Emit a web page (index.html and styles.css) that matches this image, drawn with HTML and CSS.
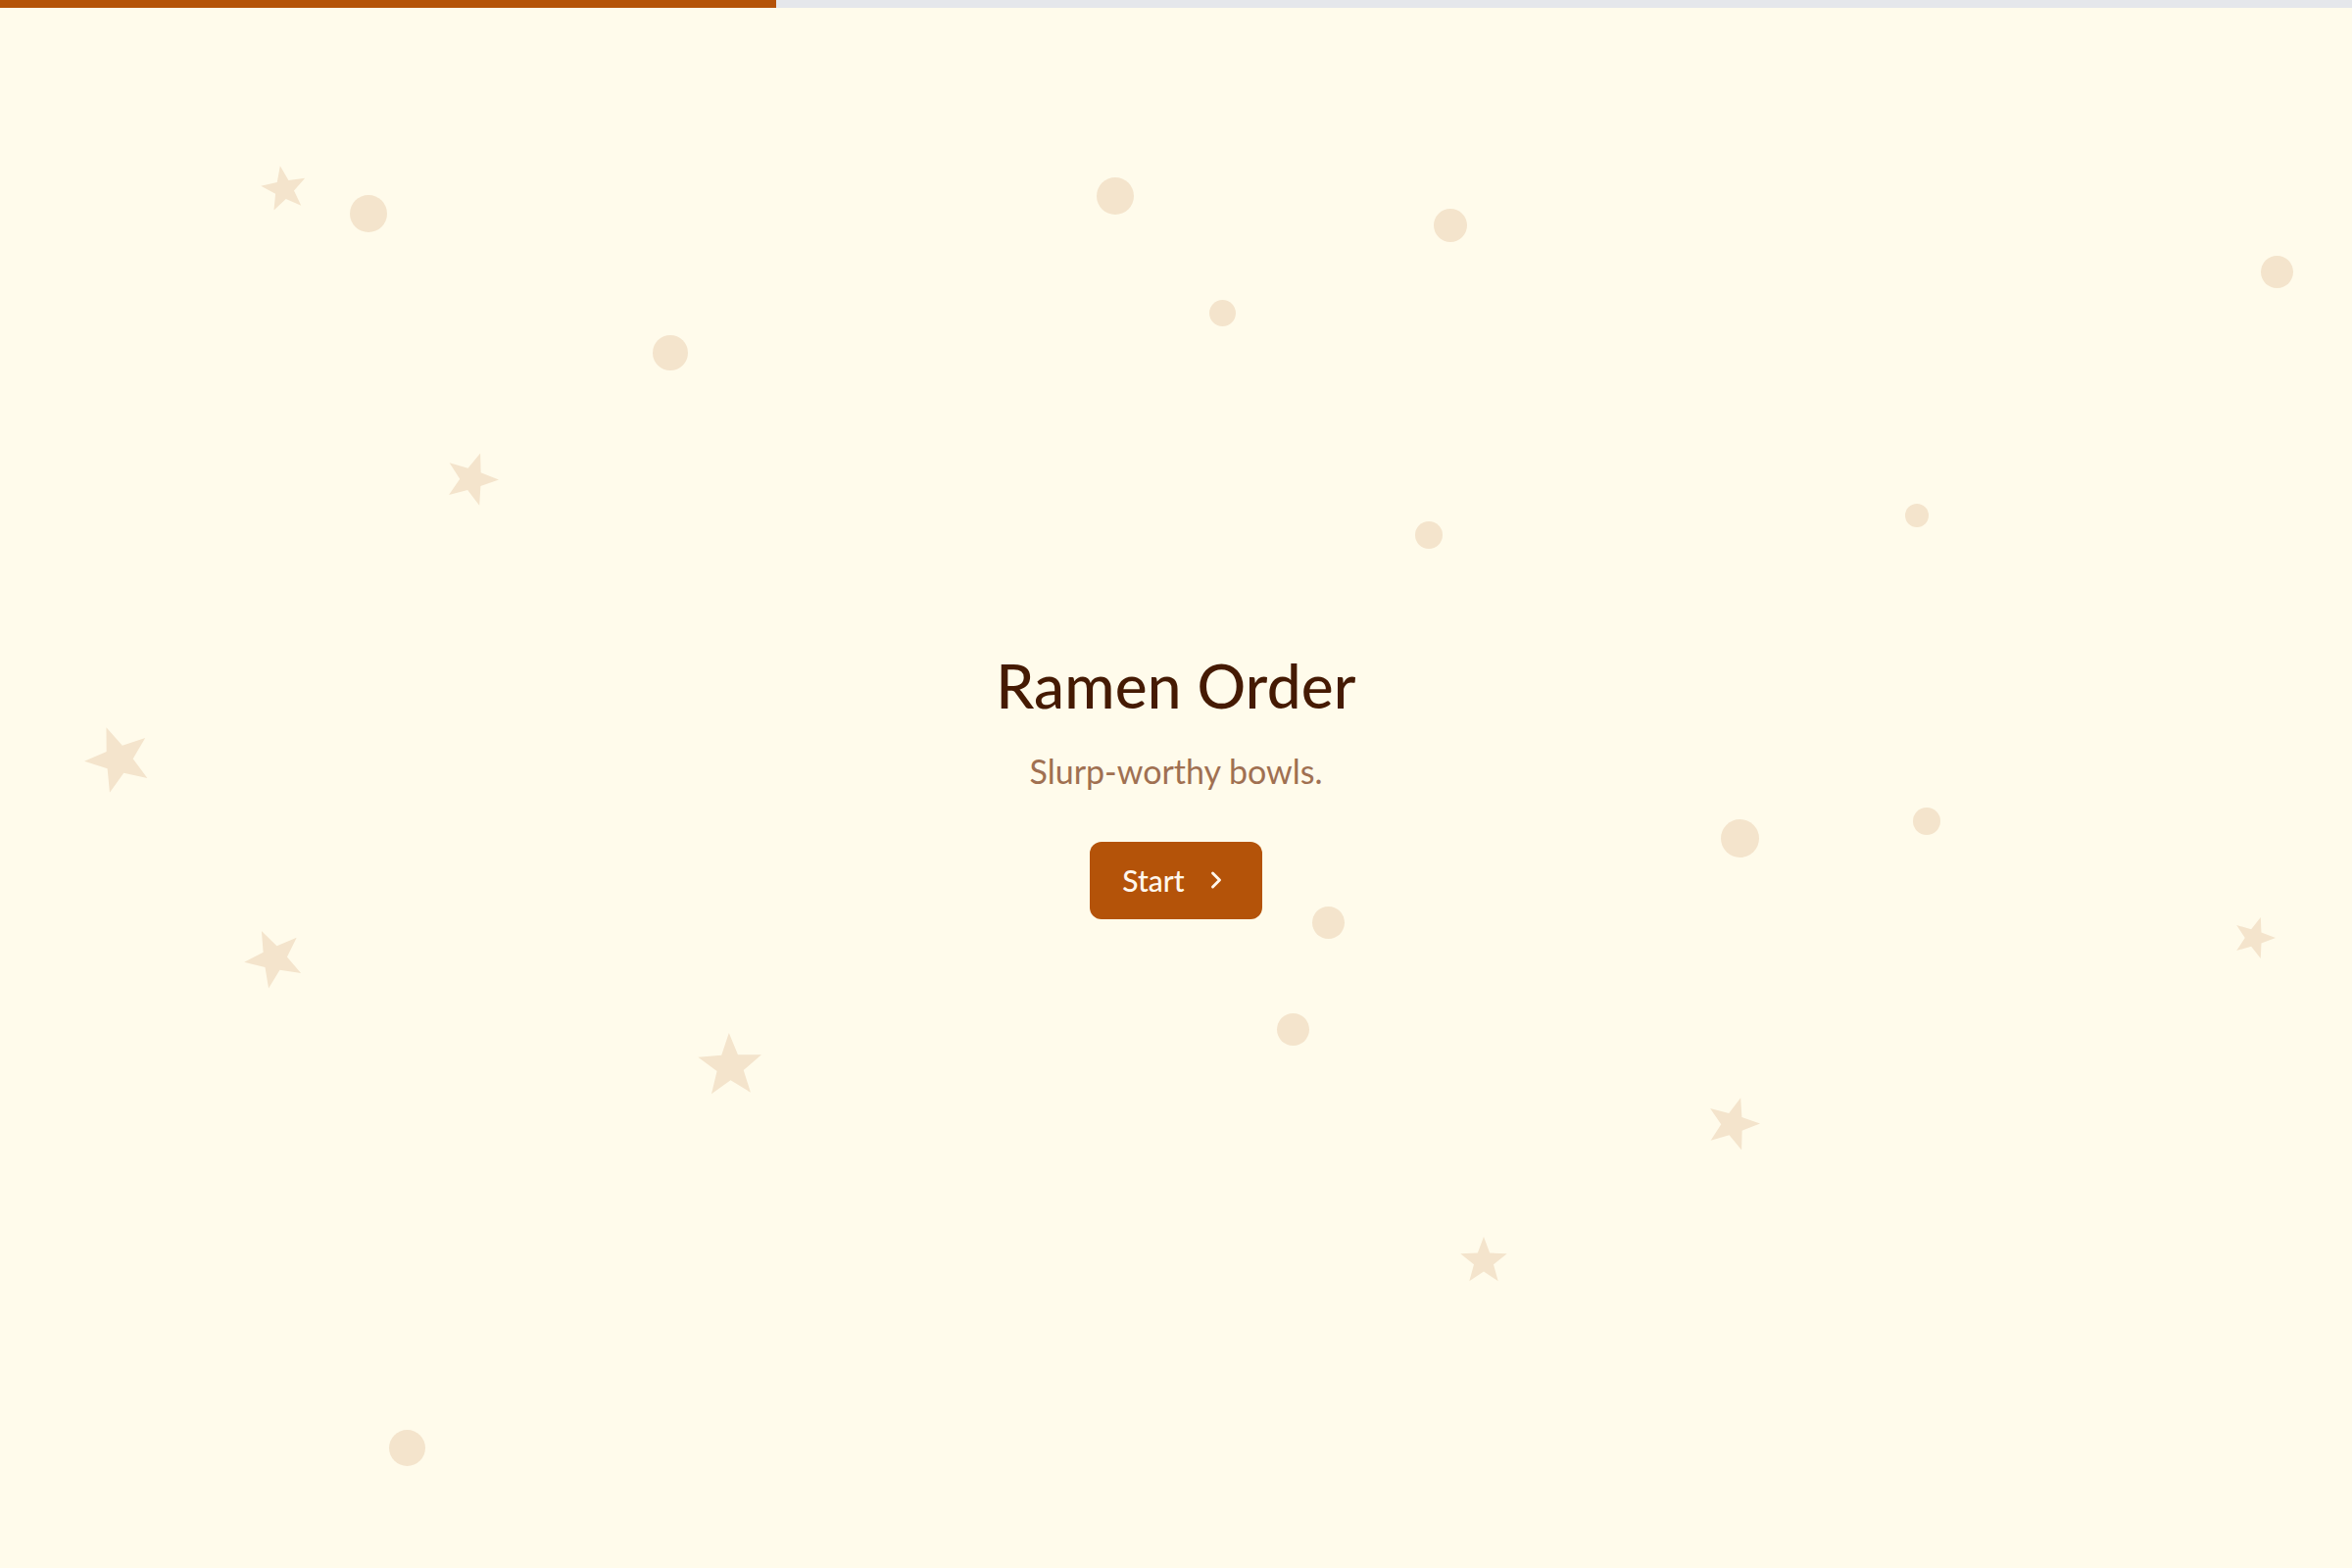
FILE: index.html
```html
<!DOCTYPE html>
<html lang="en">
<head>
<meta charset="utf-8">
<title>Ramen Order</title>
<link rel="stylesheet" href="styles.css">
</head>
<body>
<div class="page">
  <div class="progress"><div class="progress-fill"></div></div>

  <div class="decor" aria-hidden="true">
    <span class="dot c1"></span>
    <span class="dot c2"></span>
    <span class="dot c3"></span>
    <span class="dot c4"></span>
    <span class="dot c5"></span>
    <span class="dot c6"></span>
    <span class="dot c7"></span>
    <span class="dot c8"></span>
    <span class="dot c9"></span>
    <span class="dot c10"></span>
    <span class="dot c11"></span>
    <span class="dot c12"></span>
    <span class="dot c13"></span>

    <svg class="star st1" viewBox="-1 -1 2 2"><polygon points="0,-1 0.2469,-0.3398 0.9511,-0.309 0.3995,0.1298 0.5878,0.809 0,0.42 -0.5878,0.809 -0.3995,0.1298 -0.9511,-0.309 -0.2469,-0.3398"/></svg>
    <svg class="star st2" viewBox="-1 -1 2 2"><polygon points="0,-1 0.2469,-0.3398 0.9511,-0.309 0.3995,0.1298 0.5878,0.809 0,0.42 -0.5878,0.809 -0.3995,0.1298 -0.9511,-0.309 -0.2469,-0.3398"/></svg>
    <svg class="star st3" viewBox="-1 -1 2 2"><polygon points="0,-1 0.2469,-0.3398 0.9511,-0.309 0.3995,0.1298 0.5878,0.809 0,0.42 -0.5878,0.809 -0.3995,0.1298 -0.9511,-0.309 -0.2469,-0.3398"/></svg>
    <svg class="star st4" viewBox="-1 -1 2 2"><polygon points="0,-1 0.2469,-0.3398 0.9511,-0.309 0.3995,0.1298 0.5878,0.809 0,0.42 -0.5878,0.809 -0.3995,0.1298 -0.9511,-0.309 -0.2469,-0.3398"/></svg>
    <svg class="star st5" viewBox="-1 -1 2 2"><polygon points="0,-1 0.2469,-0.3398 0.9511,-0.309 0.3995,0.1298 0.5878,0.809 0,0.42 -0.5878,0.809 -0.3995,0.1298 -0.9511,-0.309 -0.2469,-0.3398"/></svg>
    <svg class="star st6" viewBox="-1 -1 2 2"><polygon points="0,-1 0.2469,-0.3398 0.9511,-0.309 0.3995,0.1298 0.5878,0.809 0,0.42 -0.5878,0.809 -0.3995,0.1298 -0.9511,-0.309 -0.2469,-0.3398"/></svg>
    <svg class="star st7" viewBox="-1 -1 2 2"><polygon points="0,-1 0.2469,-0.3398 0.9511,-0.309 0.3995,0.1298 0.5878,0.809 0,0.42 -0.5878,0.809 -0.3995,0.1298 -0.9511,-0.309 -0.2469,-0.3398"/></svg>
    <svg class="star st8" viewBox="-1 -1 2 2"><polygon points="0,-1 0.2469,-0.3398 0.9511,-0.309 0.3995,0.1298 0.5878,0.809 0,0.42 -0.5878,0.809 -0.3995,0.1298 -0.9511,-0.309 -0.2469,-0.3398"/></svg>
  </div>

  <main class="hero">
    <h1 class="title">Ramen Order</h1>
    <p class="subtitle">Slurp-worthy bowls.</p>
    <button class="start-btn" type="button">
      <span>Start</span>
      <svg class="chev" viewBox="0 0 24 24" fill="none" stroke="currentColor" stroke-width="2.5" stroke-linecap="round" stroke-linejoin="round"><path d="m9 18 6-6-6-6"/></svg>
    </button>
  </main>
</div>
</body>
</html>
```

FILE: styles.css
```css
* { box-sizing: border-box; }

html, body {
  margin: 0;
  padding: 0;
  height: 100%;
}

body {
  background: #fffbeb;
  font-family: Lato, "Open Sans", "Noto Sans", sans-serif;
  overflow: hidden;
}

.page {
  position: relative;
  display: flex;
  flex-direction: column;
  min-height: 100vh;
}

/* progress bar overlays the top edge of the page */
.progress {
  position: absolute;
  top: 0;
  left: 0;
  right: 0;
  z-index: 2;
  height: 8px;
  background: #e5e7eb;
}

.progress-fill {
  width: 33%;
  height: 100%;
  background: #b45309;
}

.decor {
  position: absolute;
  inset: 0;
  pointer-events: none;
  z-index: 0;
}

.dot {
  position: absolute;
  border-radius: 50%;
  background: #f4e4cc;
}

.star {
  position: absolute;
  fill: #f4e4cc;
  overflow: visible;
}

/* circles: left = cx - d/2, top = cy - d/2 */
.c1  { left: 357px;  top: 199px;  width: 38px; height: 38px; }
.c2  { left: 1119px; top: 181px;  width: 38px; height: 38px; }
.c3  { left: 1463px; top: 213px;  width: 34px; height: 34px; }
.c4  { left: 1234px; top: 306px;  width: 27px; height: 27px; }
.c5  { left: 666px;  top: 342px;  width: 36px; height: 36px; }
.c6  { left: 2307px; top: 261px;  width: 33px; height: 33px; }
.c7  { left: 1444px; top: 532px;  width: 28px; height: 28px; }
.c8  { left: 1944px; top: 514px;  width: 24px; height: 24px; }
.c9  { left: 1756px; top: 836px;  width: 39px; height: 39px; }
.c10 { left: 1952px; top: 824px;  width: 28px; height: 28px; }
.c11 { left: 1339px; top: 925px;  width: 33px; height: 33px; }
.c12 { left: 1303px; top: 1034px; width: 33px; height: 33px; }
.c13 { left: 397px;  top: 1459px; width: 37px; height: 37px; }

/* stars: left = cx - R, top = cy - R, size = 2R */
.st1 { left: 266px;  top: 169px;  width: 48px; height: 48px; transform: rotate(-10deg); }
.st2 { left: 453px;  top: 461px;  width: 56px; height: 56px; transform: rotate(19deg); }
.st3 { left: 86px;   top: 740px;  width: 70px; height: 70px; transform: rotate(-21deg); }
.st4 { left: 249px;  top: 947px;  width: 62px; height: 62px; transform: rotate(-25deg); }
.st5 { left: 711px;  top: 1054px; width: 68px; height: 68px; transform: rotate(-2deg); }
.st6 { left: 2278px; top: 935px;  width: 44px; height: 44px; transform: rotate(18deg); }
.st7 { left: 1740px; top: 1119px; width: 56px; height: 56px; transform: rotate(17deg); }
.st8 { left: 1489px; top: 1262px; width: 50px; height: 50px; transform: rotate(0deg); }

.hero {
  position: relative;
  z-index: 1;
  flex: 1 1 auto;
  display: flex;
  flex-direction: column;
  align-items: center;
  justify-content: center;
  text-align: center;
}

.title {
  margin: 0;
  font-size: 62px;
  line-height: 1.2;
  font-weight: 500;
  color: #451a03;
  letter-spacing: 0.2px;
}

.subtitle {
  margin: 24px 0 0;
  font-size: 34px;
  line-height: 1.5;
  font-weight: 400;
  color: #a07051;
}

.start-btn {
  margin-top: 47px;
  display: inline-flex;
  align-items: center;
  gap: 18px;
  height: 79px;
  padding: 0 33px;
  border: none;
  border-radius: 12px;
  background: #b45309;
  color: #fff7ed;
  font-family: inherit;
  font-size: 30px;
  font-weight: 500;
  cursor: pointer;
}

.chev {
  width: 28px;
  height: 28px;
}
```
